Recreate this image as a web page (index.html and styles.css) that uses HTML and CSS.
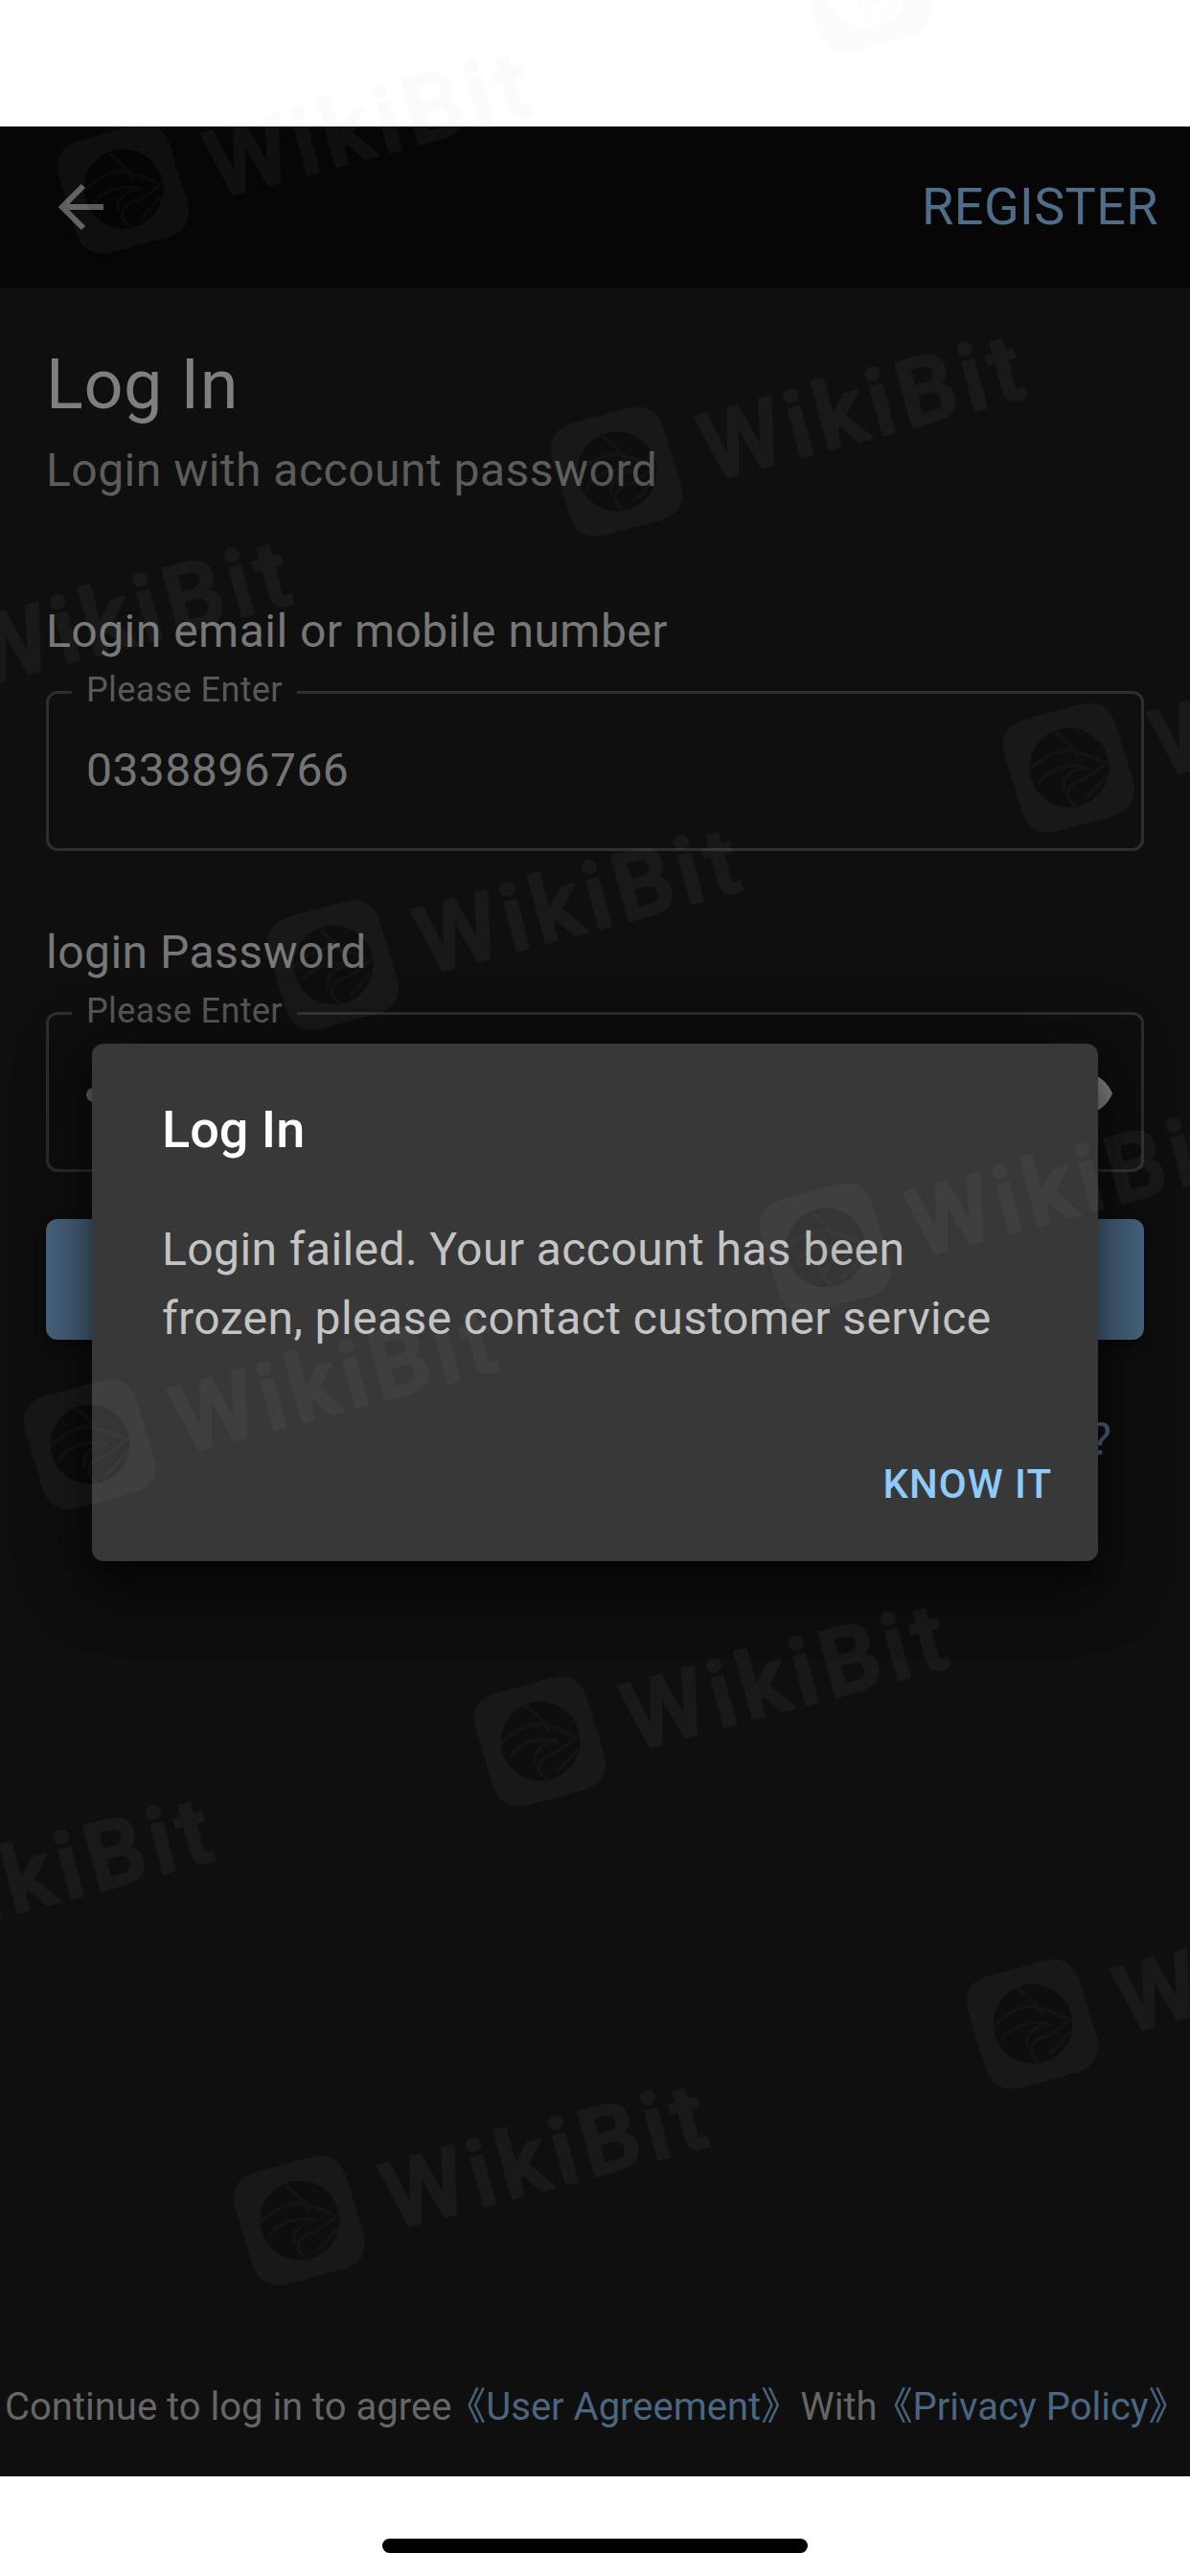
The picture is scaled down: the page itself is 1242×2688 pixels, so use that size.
FILE: index.html
```html
<!DOCTYPE html>
<html lang="en">
<head>
<meta charset="utf-8">
<title>Log In</title>
<link rel="stylesheet" href="styles.css">
</head>
<body>
<div class="screen">
  <div class="status-space"></div>
  <header class="appbar">
    <svg class="back" viewBox="0 0 54 54" aria-hidden="true"><path d="M48 27H5M27 5 5 27l22 22"/></svg>
    <span class="register">REGISTER</span>
  </header>
  <main class="main">
    <div class="form">
      <h1 class="title">Log In</h1>
      <p class="subtitle">Login with account password</p>
      <label class="label label-first">Login email or mobile number</label>
      <fieldset class="field">
        <legend class="legend">Please Enter</legend>
        <div class="field-row"><span class="value">0338896766</span></div>
      </fieldset>
      <label class="label label-second">login Password</label>
      <fieldset class="field">
        <legend class="legend">Please Enter</legend>
        <div class="field-row">
          <span class="dot"></span>
          <svg class="eye" viewBox="0 0 24 24" aria-hidden="true"><path d="M12 4.5C7 4.5 2.73 7.61 1 12c1.73 4.39 6 7.5 11 7.5s9.27-3.11 11-7.5c-1.73-4.39-6-7.5-11-7.5zM12 17c-2.76 0-5-2.24-5-5s2.24-5 5-5 5 2.24 5 5-2.24 5-5 5zm0-8c-1.66 0-3 1.34-3 3s1.34 3 3 3 3-1.34 3-3-1.34-3-3-3z"/></svg>
        </div>
      </fieldset>
      <div class="submit"></div>
      <div class="forgot">?</div>
    </div>
    <p class="agree">Continue to log in to agree <span class="link link-user">《User Agreement》</span><span class="with">With</span><span class="link link-privacy">《Privacy Policy》</span></p>
  </main>
  <div class="home-space"><span class="home-bar"></span></div>

  <section class="dialog">
    <h2 class="dialog-title">Log In</h2>
    <p class="dialog-body">Login failed. Your account has been frozen, please contact customer service</p>
    <div class="dialog-actions"><span class="dialog-btn">KNOW IT</span></div>
  </section>

  <svg class="wm-defs" aria-hidden="true">
    <symbol id="wm-logo" viewBox="0 0 108 108">
      <circle class="wm-disc" cx="54" cy="54" r="36"/>
      <path class="wm-ring" fill-rule="evenodd" d="M28 1H78C95 1 104 10 105 26L107 80C107 97 98 106 82 107H30C12 107 3 98 2 82L0 28C0 10 10 1 28 1ZM54 18A36 36 0 1 0 54 90A36 36 0 1 0 54 18Z"/>
      <path class="wm-eagle" d="M20 46C34 38 48 36 56 38 66 41 76 50 84 56M24 60C36 50 50 50 66 56M50 20C58 30 62 38 64 46M44 72C44 62 54 56 68 58M50 88C42 78 48 68 60 68 70 68 80 62 88 58M62 84C70 80 76 76 84 70"/>
    </symbol>
  </svg>
  <svg class="wm wm-a" viewBox="0 0 108 108"><use href="#wm-logo" x="-8" y="-8" width="124" height="124"/><text class="wm-text" x="145" y="89" textLength="344">WikiBit</text></svg>
  <svg class="wm wm-b" viewBox="0 0 108 108"><use href="#wm-logo" x="-8" y="-8" width="124" height="124"/><text class="wm-text" x="145" y="89" textLength="344">WikiBit</text></svg>
  <svg class="wm wm-c" viewBox="0 0 108 108"><use href="#wm-logo" x="-8" y="-8" width="124" height="124"/><text class="wm-text" x="145" y="89" textLength="344">WikiBit</text></svg>
  <svg class="wm wm-d" viewBox="0 0 108 108"><use href="#wm-logo" x="-8" y="-8" width="124" height="124"/><text class="wm-text" x="145" y="89" textLength="344">WikiBit</text></svg>
  <svg class="wm wm-e" viewBox="0 0 108 108"><use href="#wm-logo" x="-8" y="-8" width="124" height="124"/><text class="wm-text" x="145" y="89" textLength="344">WikiBit</text></svg>
  <svg class="wm wm-f" viewBox="0 0 108 108"><use href="#wm-logo" x="-8" y="-8" width="124" height="124"/><text class="wm-text" x="145" y="89" textLength="344">WikiBit</text></svg>
  <svg class="wm wm-g" viewBox="0 0 108 108"><use href="#wm-logo" x="-8" y="-8" width="124" height="124"/><text class="wm-text" x="145" y="89" textLength="344">WikiBit</text></svg>
  <svg class="wm wm-h" viewBox="0 0 108 108"><use href="#wm-logo" x="-8" y="-8" width="124" height="124"/><text class="wm-text" x="145" y="89" textLength="344">WikiBit</text></svg>
  <svg class="wm wm-i" viewBox="0 0 108 108"><use href="#wm-logo" x="-8" y="-8" width="124" height="124"/><text class="wm-text" x="145" y="89" textLength="344">WikiBit</text></svg>
  <svg class="wm wm-j" viewBox="0 0 108 108"><use href="#wm-logo" x="-8" y="-8" width="124" height="124"/><text class="wm-text" x="145" y="89" textLength="344">WikiBit</text></svg>
  <svg class="wm wm-k" viewBox="0 0 108 108"><use href="#wm-logo" x="-8" y="-8" width="124" height="124"/><text class="wm-text" x="145" y="89" textLength="344">WikiBit</text></svg>
  <svg class="wm wm-l" viewBox="0 0 108 108"><use href="#wm-logo" x="-8" y="-8" width="124" height="124"/><text class="wm-text" x="145" y="89" textLength="344">WikiBit</text></svg>
</div>
</body>
</html>
```
FILE: styles.css
```css
* { box-sizing: border-box; }
html, body { margin: 0; padding: 0; background: #fff; }
body { font-family: Roboto, "Noto Sans CJK SC", sans-serif; }

.screen {
  position: relative;
  width: 1242px;
  height: 2688px;
  overflow: hidden;
  display: flex;
  flex-direction: column;
}
.status-space { height: 132px; background: #fff; }

.appbar {
  height: 168px;
  background: #060606;
  display: flex;
  align-items: center;
  justify-content: space-between;
  padding: 0 33px 0 60px;
}
.back { width: 54px; height: 54px; fill: none; stroke: #5f5f63; stroke-width: 6; }
.register { font-size: 54px; line-height: 64px; letter-spacing: .4px; color: #4f6d89; }

.main {
  flex: 1;
  background: #0f0f0f;
  display: flex;
  flex-direction: column;
}
.form { padding: 60px 48px 0; display: flex; flex-direction: column; }
.title { margin: 0; font-size: 72px; line-height: 84px; font-weight: 400; letter-spacing: .6px; color: #7f7f7f; }
.subtitle { margin: 19px 0 0; font-size: 48px; line-height: 56px; letter-spacing: .48px; color: #5c5c5c; }
.label { display: block; font-size: 48px; line-height: 56px; letter-spacing: .48px; color: #777; }
.label-first { margin-top: 112px; }
.label-second { margin-top: 78px; }

.field {
  margin: 12px 0 0;
  padding: 0;
  height: 189px;
  border: 3px solid #2e2e2e;
  border-radius: 12px;
  display: block;
  min-width: 0;
}
.legend {
  margin-left: 24px;
  padding: 0 15px 5px;
  font-size: 36px;
  line-height: 42px;
  letter-spacing: .4px;
  color: #595959;
}
.field-row {
  height: 115px;
  padding: 0 27px 0 39px;
  display: flex;
  align-items: center;
  justify-content: space-between;
}
.value { font-size: 48px; line-height: 56px; letter-spacing: .45px; color: #747474; }
.dot { width: 15px; height: 15px; margin-top: 8px; border-radius: 50%; background: #6a6a6a; }
.eye { width: 72px; height: 72px; margin-top: 4px; fill: #8a8a8a; }

.submit {
  margin-top: 49px;
  height: 126px;
  border-radius: 12px;
  background: #4a6783;
  box-shadow: 0 6px 12px rgba(0,0,0,.35);
}
.forgot {
  margin-top: 76px;
  padding-right: 34px;
  text-align: right;
  font-size: 48px;
  line-height: 56px;
  color: #4f6a85;
}

.agree {
  margin: auto 0 0;
  padding: 0 0 48px 5px;
  font-size: 40px;
  line-height: 48px;
  color: #666;
  white-space: nowrap;
}
.link { color: #4a6681; }
.link-user { margin-left: -14px; }
.with { margin-left: 1px; }
.link-privacy { margin-left: -3px; }

.home-space {
  height: 104px;
  background: #fff;
  display: flex;
  justify-content: center;
  padding-top: 65px;
}
.home-bar { width: 444px; height: 15px; border-radius: 8px; background: #000; }

.dialog {
  position: absolute;
  left: 96px;
  top: 1089px;
  width: 1050px;
  height: 540px;
  padding: 58px 48px 0 73px;
  border-radius: 12px;
  background: #383838;
  box-shadow: 0 33px 60px 5px rgba(0,0,0,.34), 0 12px 70px 14px rgba(0,0,0,.3), 0 16px 22px -10px rgba(0,0,0,.4);
}
.dialog-title { margin: 0; font-size: 54px; line-height: 64px; font-weight: 500; color: #fff; }
.dialog-body { margin: 57px 0 0; padding-right: 25px; font-size: 48px; line-height: 72px; letter-spacing: .42px; color: #c4c4c4; }
.dialog-actions { margin-top: 112px; display: flex; justify-content: flex-end; }
.dialog-btn { font-size: 42px; line-height: 50px; font-weight: 500; letter-spacing: 1px; color: #90caf9; }

/* Watermark stamps lie over the whole screenshot */
.wm-defs { position: absolute; width: 0; height: 0; }
.wm {
  position: absolute;
  width: 108px;
  height: 108px;
  overflow: visible;
  transform: rotate(-15deg);
  transform-origin: 54px 54px;
  pointer-events: none;
}
.wm-ring { fill: rgb(200,200,200); fill-opacity: .05; }
.wm-disc { fill: #000; fill-opacity: var(--disc, .05); }
.wm-eagle { fill: none; stroke: rgb(200,200,200); stroke-opacity: .035; stroke-width: 3; stroke-linecap: round; }
.wm-text {
  font-family: Roboto, sans-serif;
  font-size: 97px;
  font-weight: 500;
  fill: rgb(200,200,200);
  stroke: rgb(200,200,200);
  stroke-width: 3px;
  stroke-linejoin: round;
  opacity: .05;
}
.wm-a { left: 75px; top: 143px; }
.wm-b { left: 590px; top: 438px; }
.wm-c { left: 1062px; top: 747px; }
.wm-d { left: 294px; top: 953px; }
.wm-e { left: 808px; top: 1248px; }
.wm-f { left: 40px; top: 1453px; }
.wm-g { left: 510px; top: 1763px; }
.wm-h { left: 1024px; top: 2058px; }
.wm-i { left: 259px; top: 2263px; }
.wm-j { left: -175px; top: 653px; }
.wm-k { left: -257px; top: 1965px; }
.wm-l { left: 850px; top: -67px; --disc: 0; }
```
